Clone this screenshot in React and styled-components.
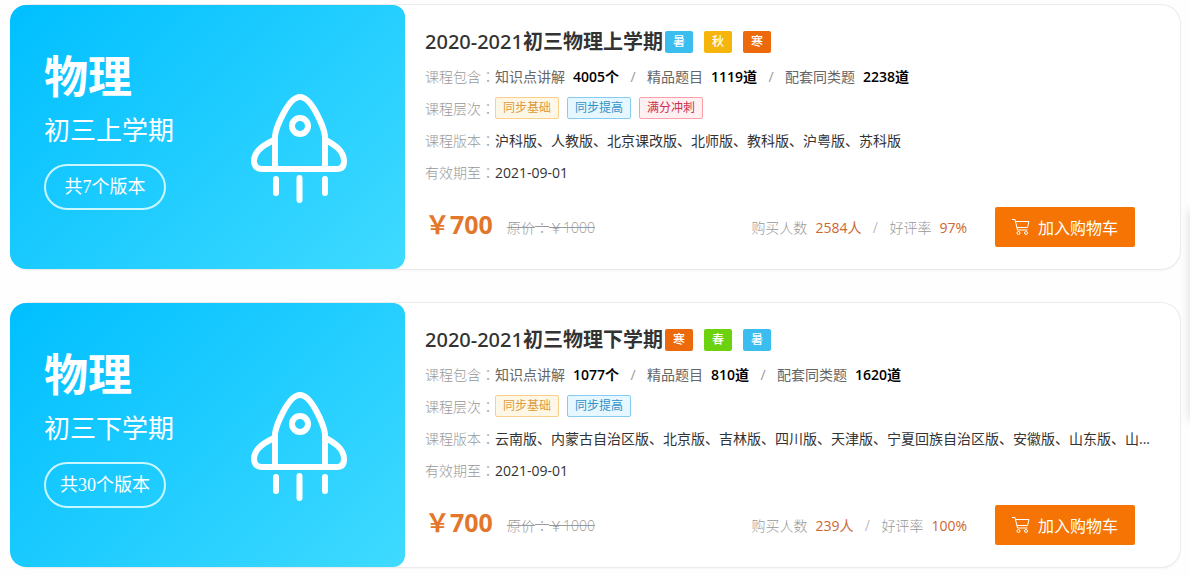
import React from "react";
import styled, { createGlobalStyle } from "styled-components";

const courses = [
    {
        id: 1,
        subject: "物理",
        term: "初三上学期",
        versionCount: "共7个版本",
        year: "2020-2021",
        name: "初三物理上学期",
        seasons: ["暑", "秋", "寒"],
        contents: [
            { label: "知识点讲解", count: "4005个" },
            { label: "精品题目", count: "1119道" },
            { label: "配套同类题", count: "2238道" },
        ],
        levels: ["同步基础", "同步提高", "满分冲刺"],
        versions: "沪科版、人教版、北京课改版、北师版、教科版、沪粤版、苏科版",
        expires: "2021-09-01",
        price: "700",
        oldPrice: "1000",
        buyers: "2584人",
        rating: "97%",
    },
    {
        id: 2,
        subject: "物理",
        term: "初三下学期",
        versionCount: "共30个版本",
        year: "2020-2021",
        name: "初三物理下学期",
        seasons: ["寒", "春", "暑"],
        contents: [
            { label: "知识点讲解", count: "1077个" },
            { label: "精品题目", count: "810道" },
            { label: "配套同类题", count: "1620道" },
        ],
        levels: ["同步基础", "同步提高"],
        versions: "云南版、内蒙古自治区版、北京版、吉林版、四川版、天津版、宁夏回族自治区版、安徽版、山东版、山...",
        expires: "2021-09-01",
        price: "700",
        oldPrice: "1000",
        buyers: "239人",
        rating: "100%",
    },
];

const seasonColors = {
    暑: "#3bbdf0",
    秋: "#f5b50a",
    寒: "#ed6a0c",
    春: "#6cd10e",
};

const levelColors = {
    同步基础: { text: "#dc9a3c", border: "#fbd08c", back: "#fff7e6" },
    同步提高: { text: "#2f93c8", border: "#84cdf0", back: "#e6f7ff" },
    满分冲刺: { text: "#cf2f50", border: "#fb9fa9", back: "#fff0f1" },
};

function Rocket() {
    return (
        <RocketIcon viewBox="0 0 96 110" aria-hidden="true">
            <path d="M24 75V42C25 34 37 3 49 3S73 34 74 42V75" />
            <path d="M23 46C15 50 3 56 3 67C3 72 6 75 11 75H86C91 75 93 72 93 67C93 56 82 50 75 46" />
            <circle cx="49" cy="32" r="8" />
            <path d="M25 85V99M48.500 84V106M74 85V99" />
        </RocketIcon>
    );
}

function Cart() {
    return (
        <CartIcon viewBox="0 0 18 18" aria-hidden="true">
            <path d="M0 1.500H3L5.500 12H15.500M3.500 3.500H17L15.500 9.500H5" />
            <circle cx="6.500" cy="15" r="1.500" />
            <circle cx="14" cy="15" r="1.500" />
        </CartIcon>
    );
}

function Label({ children }) {
    return (
        <LabelText>
            {children}
            <Colon>：</Colon>
        </LabelText>
    );
}

function CourseCard({ course }) {
    return (
        <Card>
            <Banner>
                <BannerText>
                    <Subject>{course.subject}</Subject>
                    <Term>{course.term}</Term>
                    <VersionCount>{course.versionCount}</VersionCount>
                </BannerText>
                <Rocket />
            </Banner>
            <Info>
                <TitleRow>
                    <Title>
                        <Year>{course.year}</Year>
                        {course.name}
                    </Title>
                    <Seasons>
                        {course.seasons.map((season) => (
                            <Season key={season} $color={seasonColors[season]}>{season}</Season>
                        ))}
                    </Seasons>
                </TitleRow>
                <Row>
                    <Label>课程包含</Label>
                    {course.contents.map((item, index) => (
                        <React.Fragment key={item.label}>
                            {index > 0 && <Slash>/</Slash>}
                            <Content>
                                {item.label}
                                <Count>{item.count}</Count>
                            </Content>
                        </React.Fragment>
                    ))}
                </Row>
                <Row>
                    <Label>课程层次</Label>
                    <Levels>
                        {course.levels.map((level) => (
                            <Level key={level} $colors={levelColors[level]}>{level}</Level>
                        ))}
                    </Levels>
                </Row>
                <Row>
                    <Label>课程版本</Label>
                    <Value>{course.versions}</Value>
                </Row>
                <Row>
                    <Label>有效期至</Label>
                    <Value>{course.expires}</Value>
                </Row>
                <Footer>
                    <Price>￥{course.price}</Price>
                    <del>
                        原价<Colon>：</Colon>￥{course.oldPrice}
                    </del>
                    <Stats>
                        <span>购买人数</span>
                        <Stat>{course.buyers}</Stat>
                        <Slash>/</Slash>
                        <span>好评率</span>
                        <Stat>{course.rating}</Stat>
                    </Stats>
                    <CartButton type="button">
                        <Cart />
                        加入购物车
                    </CartButton>
                </Footer>
            </Info>
        </Card>
    );
}

function App() {
    return (
        <>
            <GlobalStyle />
            <List>
                {courses.map((course) => (
                    <CourseCard key={course.id} course={course} />
                ))}
            </List>
            <SideBar />
        </>
    );
}

export default App;

const GlobalStyle = createGlobalStyle`
    * {
        box-sizing: border-box;
    }
    body {
        margin: 0;
        background: #fefefe;
        color: #333;
        font-family: "Open Sans", "Noto Sans CJK SC", sans-serif;
        font-size: 14px;
        overflow-x: hidden;
    }
`

const List = styled.main`
    display: flex;
    flex-direction: column;
    gap: 32px;
    padding: 4px 9px 10px 10px;
`

const Card = styled.article`
    display: flex;
    min-height: 266px;
    border: 1px solid #ebebeb;
    border-left: 0;
    border-radius: 20px;
    background: #fff;
    box-shadow: 0 1px 2px rgba(0, 0, 0, 0.04);
`

const Banner = styled.div`
    display: flex;
    flex: none;
    align-items: center;
    justify-content: space-between;
    width: 395px;
    padding: 0 58px 0 34px;
    border-radius: 16px 12px 12px 16px;
    background: linear-gradient(135deg, #00bfff, #3fdaff);
    color: #fff;
`

const BannerText = styled.div`
    display: flex;
    flex-direction: column;
    align-items: flex-start;
    padding-bottom: 16px;
`

const Subject = styled.div`
    font-size: 44px;
    font-weight: 700;
    line-height: 56px;
`

const Term = styled.div`
    font-size: 26px;
    line-height: 52px;
`

const VersionCount = styled.div`
    width: 122px;
    margin-top: 8px;
    border: 2px solid #c9f7ff;
    border-radius: 23px;
    font-family: "Liberation Serif", "Noto Sans CJK SC", serif;
    font-size: 18px;
    line-height: 42px;
    text-align: center;
`

const RocketIcon = styled.svg`
    width: 96px;
    height: 110px;
    margin-top: 24px;
    fill: none;
    stroke: #fff;
    stroke-width: 6;
    stroke-linecap: round;
    stroke-linejoin: round;
`

const Info = styled.div`
    flex: 1;
    min-width: 0;
    padding: 18px 20px 0 20px;
`

const TitleRow = styled.div`
    display: flex;
    align-items: center;
    gap: 2px;
    height: 37px;
`

const Title = styled.h2`
    margin: 0;
    font-size: 20px;
    font-weight: 700;
    line-height: 36px;
    white-space: nowrap;
`

const Year = styled.span`
    font-family: "Noto Sans", sans-serif;
    font-weight: 500;
`

const Seasons = styled.div`
    display: flex;
    gap: 11px;
`

const Season = styled.span`
    width: 28px;
    border-radius: 2px;
    background: ${(props) => props.$color};
    color: #fff;
    font-size: 12px;
    font-weight: 500;
    line-height: 22px;
    text-align: center;
`

const Row = styled.div`
    display: flex;
    align-items: center;
    height: 32px;
    white-space: nowrap;
`

const LabelText = styled.span`
    flex: none;
    color: #999;
    font-weight: 300;
`

const Colon = styled.span`
    font-family: "Noto Sans CJK TC", sans-serif;
`

const Content = styled.span`
    color: #666;
`

const Count = styled.b`
    margin-left: 8px;
    color: #000;
    font-weight: 600;
`

const Slash = styled.span`
    width: 28px;
    color: #999;
    text-align: center;
`

const Levels = styled.div`
    display: flex;
    gap: 8px;
`

const Level = styled.span`
    width: 64px;
    border: 1px solid ${(props) => props.$colors.border};
    border-radius: 2px;
    background: ${(props) => props.$colors.back};
    color: ${(props) => props.$colors.text};
    font-size: 12px;
    line-height: 20px;
    text-align: center;
`

const Value = styled.span`
    overflow: hidden;
    text-overflow: ellipsis;
`

const Footer = styled.div`
    display: flex;
    align-items: center;
    padding: 19px 25px 0 0;
    color: #999;
    font-weight: 300;
    white-space: nowrap;
`

const Price = styled.strong`
    margin-right: 14px;
    padding-bottom: 6px;
    color: #e4762b;
    font-size: 25px;
    font-weight: 700;
    line-height: 32px;
`

const Stats = styled.div`
    display: flex;
    align-items: center;
    margin-left: auto;
`

const Stat = styled.span`
    margin-left: 8px;
    color: #cc6633;
    font-weight: 400;
`

const CartButton = styled.button`
    display: flex;
    align-items: center;
    justify-content: center;
    gap: 8px;
    width: 140px;
    height: 40px;
    margin-left: 28px;
    padding: 0;
    border: 0;
    border-radius: 2px;
    background: #f57403;
    color: #fff;
    font-family: inherit;
    font-size: 16px;
    cursor: pointer;
`

const CartIcon = styled.svg`
    width: 18px;
    height: 18px;
    fill: none;
    stroke: #fff;
    stroke-width: 1;
    stroke-linejoin: round;
`

/* tool bar parked just outside the right edge, only its shadow shows */
const SideBar = styled.aside`
    position: fixed;
    top: 210px;
    left: 100%;
    width: 40px;
    height: 210px;
    box-shadow: 0 0 10px rgba(0, 0, 0, 0.15);
`
